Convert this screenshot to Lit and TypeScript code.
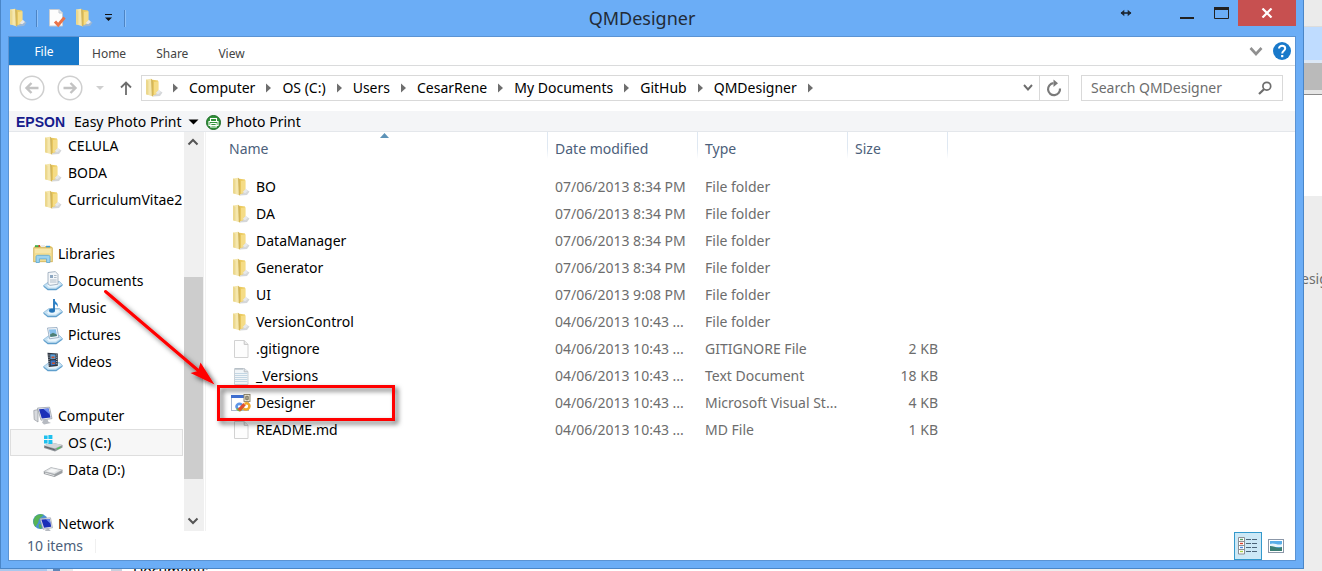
import { LitElement, html, css, svg, nothing } from "lit";
import { customElement, state } from "lit/decorators.js";

type IconName =
  | "folder" | "file" | "text" | "vs" | "libraries" | "documents" | "music"
  | "pictures" | "videos" | "computer" | "osdrive" | "drive" | "network";

const tray = svg`
  <path d="M.5 14.500 6 10.500H16.500L19.500 13.500 13 18H5Z" fill="#c3e0f3" stroke="#86b5d6" stroke-width=".7"/>
  <path d="M4 14.300 7.500 12H15.500l1.500 1.600L12.500 16.500H6Z" fill="#eaf6fd"/>
  <path d="M.5 14.500 5 18H13l6.500-4.500v1.300L13.300 19.200H4.700L.5 15.800Z" fill="#5f9fcd"/>`;

const glyphs: Record<IconName, unknown> = {
  folder: svg`
    <path d="M12 10.500 18.500 14.500 16 18 9 18.500Z" fill="#b9bcc0" opacity=".6"/>
    <path d="M8.500 1.800 14 2.600V15.500L8.500 17.500Z" fill="#eccb5f"/>
    <path d="M10 4 14.600 3.200V13.800L10 17Z" fill="#f5dc86"/>
    <path d="M2 1.500 7 .8 9 2.800V18.600L2 16.200Z" fill="#f5e7ae"/>
    <path d="M2 1.500 4.400 2.800V17L2 16.200Z" fill="#ecd88d"/>
    <path d="M7 .8 9.200 2.500v16L7.800 18Z" fill="#d3b65b"/>
    <path d="M11.500 15.200 14.800 11.800l2.200 2.200-2.800 2.200Z" fill="#e6e8ea"/>`,
  file: svg`
    <path d="M3.500 1.500h9.800l3.700 3.800v13.200H3.500Z" fill="#fdfdfd" stroke="#d2d2d2"/>
    <path d="M13.200 1.600v3.800H17" fill="#eee" stroke="#c6c6c6"/>`,
  text: svg`
    <path d="M3.500 2.500h9.800l3.700 3v13H3.500Z" fill="#f1f5f8" stroke="#c9d0d6"/>
    <path d="M5 2v2M7 2v2M9 2v2M11 2v2" stroke="#a6b0b8"/>
    <path d="M4 7.500h12.500M4 9.500h12.500M4 11.500h12.500M4 13.500h12.500M4 15.500h12.500" stroke="#c3d6e3"/>
    <path d="M13.200 2.400v3.400H17" fill="#e4e7ea" stroke="#b9bfc5"/>`,
  vs: svg`
    <rect x=".5" y="2.500" width="17" height="15" fill="#fff" stroke="#a9b8ce"/>
    <path d="M0 2h13v3H0Z" fill="#3f6fd1"/>
    <rect x="13" y="1.500" width="6" height="7" fill="#f0ead8" stroke="#8a8268" stroke-width=".9"/>
    <path d="M14.800 3.300h2.400v3.400h-2.400zM14.800 5h2.400" fill="none" stroke="#5d573f" stroke-width=".8"/>
    <ellipse cx="8.500" cy="13.500" rx="3" ry="2.600" fill="none" stroke="#5d95e8" stroke-width="2.600"/>
    <path d="M6 15.500C8 18.800 10.500 17 12 14" fill="none" stroke="#7cb342" stroke-width="2.200"/>
    <path d="M8 17.200 13.600 11.200" stroke="#e2502d" stroke-width="3.400"/>
    <path d="M13.500 10.800c3.500-1.400 6 1 4.400 4-1.400 2.200-4 2.200-5.600.6" fill="none" stroke="#f1a828" stroke-width="2.500"/>`,
  libraries: svg`
    <path d="M.5 4 1.800 2H18l1.500 2v14H.5Z" fill="#e8cd72"/>
    <path d="M2 1.200h4v2H2Z" fill="#3fae49"/><path d="M8 1.200h4v2H8Z" fill="#e8e8e8"/><path d="M13 1.800h4v2h-4Z" fill="#3d9bd6"/>
    <path d="M5.500 1h1.600v2H5.500Z" fill="#d9442f"/>
    <rect x=".8" y="3.800" width="18.400" height="14" fill="#f2dd92" stroke="#cdae58" stroke-width=".7"/>
    <path d="M2 6h16M2 8h16" stroke="#faeec0"/>
    <path d="M3 18.500v-5.600c0-1 .6-1.600 1.600-1.600h10.800c1 0 1.600.6 1.600 1.600v5.600h-3.400v-3.600H6.400v3.600Z" fill="#9cd2ef" stroke="#5aa6d0" stroke-width=".8"/>`,
  documents: svg`${tray}
    <path d="M5 1.500 12.400.6 15 3.400v9.800L7 14.400 5 13Z" fill="#f3f6f9" stroke="#94a6b8" stroke-width=".8"/>
    <path d="M7 4h3v3H7Z" fill="#8ca6c0"/><path d="M11 4.500h2.600M11 6.500h2.600M7 9h6.600M7 11h6.600" stroke="#a7b5c2" stroke-width=".9"/>`,
  music: svg`${tray}
    <path d="M11 1v11.400" stroke="#2273b8" stroke-width="1.800"/>
    <path d="M11 1c.4 3 5 3.400 3.600 8.200C14.400 6.800 12.500 6.200 11 6Z" fill="#2b83cb"/>
    <ellipse cx="9" cy="12.600" rx="3" ry="2.200" fill="#2273b8"/>`,
  pictures: svg`${tray}
    <path d="M4.500 3 14 2.500 15.800 12.500 6.600 13.800Z" fill="#f4f7fa" stroke="#8ba3bb" stroke-width=".8"/>
    <path d="M6 4.600 12.800 4.200 14 11 7.400 11.900Z" fill="#86c0ec"/>
    <path d="M7 9.500 10 7.800 13.700 9.600 14 11 7.400 11.900Z" fill="#4d7f74"/>`,
  videos: svg`${tray}
    <path d="M4.500 .8 14.800 1.600V14L5.800 15Z" fill="#2c3440"/>
    <path d="M7.300 2.300 12.500 2.500V7L7.400 7.200Z" fill="#5aa0d8"/><path d="M7.500 8.500 12.500 8.200V12.800L7.800 13.400Z" fill="#3b74c2"/>
    <path d="M8.500 4.500h3v1.800h-3zM9 10.500h3v1.600H9z" fill="#c9512e"/>
    <path d="M6 2.500V14M13.700 2.500v11" stroke="#d8dee5" stroke-dasharray="1 1.200" stroke-width=".9"/>`,
  computer: svg`
    <path d="M.8 4.500 5 3.500V16L1.200 13.500Z" fill="#d8dade" stroke="#94989f" stroke-width=".7"/>
    <path d="M4.500 2 16.500 1.200 19 12.600 8 14.200Z" fill="#e4e7ec" stroke="#8f96a1" stroke-width=".7"/>
    <path d="M6 3.200 15.600 2.500 17.400 11.400 8.800 12.500Z" fill="#1b2fb8"/>
    <path d="M10.500 3 15.600 2.500 16.800 8.500Z" fill="#6d8df0"/>
    <path d="M10.500 14 14.500 13.400 15.400 15.800 18 17 11 18.500 9 16.600Z" fill="#b6bac1"/>`,
  osdrive: svg`
    <path d="M1 12.500 8 9.500 19.500 12V14.500L12 18.500 1 15Z" fill="#8f9499"/>
    <path d="M1 12.500 8 9.500 19.500 12 12 15.600Z" fill="#d3d6d9"/>
    <path d="M2 13.800 11.800 16.800" stroke="#5d6267"/><path d="M14 16 17.500 14.200" stroke="#47d04f" stroke-width="1.200"/>
    <path d="M1 2.500h3.600v3.600H1zM5.400 2.100h4v4h-4zM1 6.900h3.600v3.600H1zM5.400 6.900h4v4h-4z" fill="#1ec0ee"/>`,
  drive: svg`
    <path d="M.8 11.500 8 7.500 19.500 10V13L11.500 17 .8 14Z" fill="#9a9ea2"/>
    <path d="M.8 11.500 8 7.500 19.500 10 11.500 14.200Z" fill="#e3e5e7" stroke="#a4a8ac" stroke-width=".5"/>
    <path d="M4 11.400 8.800 8.800 15 10 11 12.400Z" fill="#f7f8f8"/>
    <path d="M2 13 11.400 15.600" stroke="#e6e7e8"/>`,
  network: svg`
    <circle cx="7.500" cy="7.500" r="7.500" fill="#4b8fd6"/>
    <path d="M2 3C4 0 8-.2 10.500.8 9 3.500 6 3.500 5.600 7 5 10 3 11 2.600 13 .2 10.500-.6 6.500 2 3Z" fill="#57b356"/>
    <path d="M6 10c2-.4 3 1.500 2.500 4.800C6 15 5 13 6 10Z" fill="#57b356"/>
    <path d="M7 4.500 17.500 3.800 19.500 13.800 10 15.200Z" fill="#e4e7ec" stroke="#8f96a1" stroke-width=".6"/>
    <path d="M8.300 5.600 16.700 5 18.200 12.700 11 13.700Z" fill="#1b2fb8"/><path d="M12.800 5.300 16.700 5 17.600 9.800Z" fill="#6d8df0"/>
    <path d="M12.500 15.400 15.800 14.800 18 17.200 12 18.200Z" fill="#b6bac1"/>`,
};

const icon = (name: IconName) =>
  html`<svg class="icon" viewBox="0 0 20 20" aria-hidden="true">${glyphs[name]}</svg>`;

interface NavItem { label: string; icon: IconName; child?: boolean; }

const NAV: NavItem[][] = [
  [
    { label: "CELULA", icon: "folder", child: true },
    { label: "BODA", icon: "folder", child: true },
    { label: "CurriculumVitae2013", icon: "folder", child: true },
  ],
  [
    { label: "Libraries", icon: "libraries" },
    { label: "Documents", icon: "documents", child: true },
    { label: "Music", icon: "music", child: true },
    { label: "Pictures", icon: "pictures", child: true },
    { label: "Videos", icon: "videos", child: true },
  ],
  [
    { label: "Computer", icon: "computer" },
    { label: "OS (C:)", icon: "osdrive", child: true },
    { label: "Data (D:)", icon: "drive", child: true },
  ],
  [{ label: "Network", icon: "network" }],
];

const CRUMBS = ["Computer", "OS (C:)", "Users", "CesarRene", "My Documents", "GitHub", "QMDesigner"];

interface Entry { name: string; date: string; type: string; size: string; icon: IconName; }

const folder = (name: string, date: string): Entry => ({ name, date, type: "File folder", size: "", icon: "folder" });

const FILES: Entry[] = [
  folder("BO", "07/06/2013 8:34 PM"),
  folder("DA", "07/06/2013 8:34 PM"),
  folder("DataManager", "07/06/2013 8:34 PM"),
  folder("Generator", "07/06/2013 8:34 PM"),
  folder("UI", "07/06/2013 9:08 PM"),
  folder("VersionControl", "04/06/2013 10:43 ..."),
  { name: ".gitignore", date: "04/06/2013 10:43 ...", type: "GITIGNORE File", size: "2 KB", icon: "file" },
  { name: "_Versions", date: "04/06/2013 10:43 ...", type: "Text Document", size: "18 KB", icon: "text" },
  { name: "Designer", date: "04/06/2013 10:43 ...", type: "Microsoft Visual St...", size: "4 KB", icon: "vs" },
  { name: "README.md", date: "04/06/2013 10:43 ...", type: "MD File", size: "1 KB", icon: "file" },
];

@customElement("app-root")
export class AppRoot extends LitElement {
  @state() private selected = "OS (C:)";

  static styles = css`
    :host {
      display: grid;
      grid-template-columns: minmax(0, 1fr) 18px;
      grid-template-rows: minmax(0, 1fr) 2px;
      height: 100vh;
      overflow: hidden;
      background: #ededed;
      font: 14px/20px "Noto Sans", "Open Sans", sans-serif;
      color: #000;
    }
    * { box-sizing: border-box; }
    button {
      font: inherit;
      color: inherit;
      background: none;
      border: 0;
      padding: 0;
      margin: 0;
      display: flex;
      align-items: center;
      justify-content: center;
      white-space: nowrap;
    }
    svg { display: block; flex: none; }
    .icon { width: 20px; height: 20px; }

    .window {
      position: relative;
      display: flex;
      flex-direction: column;
      background: #6badf6;
      border: solid #4a86c8;
      border-width: 0 1px 1px;
      padding: 0 7px 7px;
    }
    .titlebar {
      display: grid;
      grid-template-columns: 1fr auto 1fr;
      height: 36px;
      flex: none;
    }
    .quick { display: flex; align-items: center; gap: 8px; }
    .quick .bar { width: 2px; height: 17px; background: #4d84c4; border-right: 1px solid #8fc2fa; }
    .quick .bar:last-child { margin-left: 3px; }
    .quick .customize { margin-left: 2px; }
    .quick .properties { margin-left: 2px; }
    h1 { margin: 0 20px 0 0; font-size: 18px; line-height: 36px; font-weight: 400; color: #222b36; }
    .controls { display: flex; justify-content: flex-end; align-items: flex-start; }
    .controls button { width: 34px; height: 26px; }
    .controls .resize { width: 28px; margin-right: 30px; }
    .controls .close { width: 58px; background: #c75050; }

    .client {
      flex: 1;
      min-height: 0;
      display: flex;
      flex-direction: column;
      background: #fff;
      border: 1px solid #5b93d3;
    }
    .ribbon {
      display: flex;
      align-items: center;
      height: 29px;
      flex: none;
      border-bottom: 1px solid #dadbdc;
      font-size: 12px;
      color: #444;
      padding-right: 4px;
    }
    .ribbon .file { width: 70px; height: 28px; padding-top: 1px; background: #1979ca; color: #fff; align-self: flex-start; }
    .tabs { display: flex; gap: 30px; padding: 5px 13px 0; flex: 1; }
    .ribbon .help { margin-left: 10px; }

    .address { display: flex; align-items: center; height: 45px; padding: 0 12px 2px 10px; flex: none; }
    .address .fwd { margin-left: 12px; }
    .address .recent { width: 8px; margin-left: 13px; }
    .address .up { width: 14px; margin: 0 8px 0 15px; }
    .path {
      flex: 1;
      display: flex;
      height: 26px;
      border: 1px solid #d9d9d9;
      align-items: center;
      padding-left: 2px;
    }
    .crumbs { flex: 1; display: flex; align-items: center; gap: 10px; padding-left: 8px; }
    .path .down { width: 22px; height: 24px; }
    .path .refresh { width: 29px; height: 24px; border-left: 1px solid #d9d9d9; }
    .search {
      display: flex;
      align-items: center;
      width: 202px;
      height: 26px;
      margin-left: 12px;
      border: 1px solid #d9d9d9;
      padding: 0 10px 0 9px;
    }
    .search input {
      flex: 1;
      min-width: 0;
      border: 0;
      outline: 0;
      padding: 0;
      font: inherit;
      background: none;
    }
    .search input::placeholder { color: #6d6d6d; opacity: 1; }

    .toolbar {
      display: flex;
      align-items: center;
      height: 21px;
      flex: none;
      padding: 2px 7px 0;
      background: #f4f5f7;
      border-bottom: 1px solid #e4e7eb;
    }
    .toolbar b { font: bold 14px/20px "Liberation Sans", Arial, sans-serif; color: #161c8c; margin-right: 9px; }
    .toolbar .caret { margin: 0 7px; }
    .toolbar .photo { gap: 5px; }

    .main { flex: 1; min-height: 0; display: flex; }
    .nav { width: 175px; flex: none; overflow: hidden; padding-right: 1px; }
    .nav ul { list-style: none; margin: 0 0 27px; padding: 0; }
    .nav li { padding-left: 1px; }
    .nav button {
      width: 100%;
      height: 27px;
      justify-content: flex-start;
      gap: 5px;
      padding-left: 22px;
      border: 1px solid transparent;
      overflow: hidden;
    }
    .nav button.child { padding-left: 32px; }
    .nav button.selected { background: #f7f7f7; border-color: #dedede; }

    .scroll {
      width: 20px;
      flex: none;
      display: grid;
      grid-template-rows: 20px 125px 202px 1fr 20px;
      background: #f0f0f0;
      justify-items: start;
      align-items: center;
    }
    .scroll svg { margin-left: 3px; }
    .thumb { grid-row: 3; width: 19px; height: 100%; background: #cdcdcd; }
    .scroll .end { grid-row: 5; }

    .list { flex: 1; min-width: 0; border-left: 1px solid #f2f2f2; margin-left: 1px; overflow: hidden; }
    table { width: 100%; table-layout: fixed; border-collapse: collapse; }
    .c-name { width: 342px; }
    .c-mid { width: 150px; }
    .c-size { width: 100px; }
    th {
      height: 41px;
      padding: 0 7px 8px;
      text-align: left;
      font-weight: 400;
      color: #4c607a;
      background: linear-gradient(#dfe8f2, #dfe8f2 60%, #fff) right top / 1px 27px no-repeat;
    }
    th:last-child { background: none; }
    th.first { padding-left: 23px; }
    .sort { float: right; margin: -6px 152px 0 0; }
    td { height: 27px; padding: 0 7px; color: #6d6d6d; white-space: nowrap; }
    td.name { color: #000; padding-left: 25px; }
    td.num { text-align: right; padding-right: 10px; }
    .cell { display: flex; align-items: center; gap: 5px; }

    .status { display: flex; align-items: center; height: 29px; flex: none; padding: 0 6px 0 18px; color: #4c607a; }
    .status .count { padding-right: 12px; border-right: 1px solid #f0f0f0; line-height: 14px; margin-right: auto; }
    .status .view { width: 28px; height: 28px; }
    .status .on { background: #cce8f6; border: 1px solid #3399cc; }
    .status .view:last-child { width: 27px; }

    .marks { position: absolute; left: -1px; top: 0; pointer-events: none; }

    .behind { display: flex; flex-direction: column; overflow: hidden; color: #6d6d6d; }
    .strip-a { height: 27px; background: #ebebeb; border-bottom: 1px solid #dcdcdc; }
    .strip-b { height: 33px; background: #bfdcff; }
    .strip-c { height: 30px; background: #bababa; border-top: 3px solid #dbe7f5; }
    .strip-d { height: 5px; background: #e5e5e5; border-bottom: 1px solid #8a8a8a; }
    .strip-e { height: 101px; background: #fff; }
    .peek { display: flex; width: 24px; margin: 73px 0 0 -3px; }
    .below {
      grid-column: 1 / -1;
      display: flex;
      overflow: hidden;
      background: linear-gradient(90deg, #a9c8ee 47px, #d5e4f6 47px, #d5e4f6 53px, #5f86b8 53px, #5f86b8 60px, #e8e8e8 60px, #e8e8e8 73px, #fff 73px, #fff 111px, #c9cfdc 111px, #c9cfdc 122px, #fff 122px, #fff 1010px, #ededed 1010px);
    }
    .below span { margin: -6px 0 0 133px; line-height: 16px; }
  `;

  private separator() {
    return html`<svg width="7" height="10" viewBox="0 0 7 10" aria-hidden="true"><path d="M1 .5 6 5 1 9.500Z" fill="#6e6e6e"/></svg>`;
  }

  private titlebar() {
    return html`
      <header class="titlebar">
        <div class="quick">
          ${icon("folder")}
          <span class="bar"></span>
          <button class="properties" aria-label="Properties">
            <svg width="18" height="20" viewBox="0 0 18 20"><path d="M1.500 1.500h9.500l3.500 3.500v13h-13Z" fill="#fdfdfd" stroke="#c5cbd2"/><path d="M11 1.500V5h3.500" fill="#e5e8ec" stroke="#c5cbd2"/><path d="M7 13.500 10.200 17 16.500 9.500" fill="none" stroke="#ea7348" stroke-width="3"/></svg>
          </button>
          <button aria-label="New folder">${icon("folder")}</button>
          <button class="customize" aria-label="Customize">
            <svg width="9" height="8" viewBox="0 0 9 8"><path d="M1 .5h7" stroke="#111"/><path d="M1 3.500h7L4.500 7Z" fill="#111"/></svg>
          </button>
          <span class="bar"></span>
        </div>
        <h1>QMDesigner</h1>
        <div class="controls">
          <button class="resize" aria-label="Resize">
            <svg width="12" height="8" viewBox="0 0 12 8"><path d="M1 4h10" stroke="#1d2733" stroke-width="1.600"/><path d="M4.300.8V7.200L.6 4ZM7.700.8V7.200L11.400 4Z" fill="#1d2733"/></svg>
          </button>
          <button aria-label="Minimize"><svg width="14" height="14"><path d="M0 12h14" stroke="#222" stroke-width="2"/></svg></button>
          <button aria-label="Maximize"><svg width="15" height="12"><path d="M.5 1.500h14v10H.5Z" fill="none" stroke="#222"/><path d="M0 1.500h15" stroke="#222" stroke-width="3"/></svg></button>
          <button class="close" aria-label="Close"><svg width="12" height="10"><path d="M1.500.5 10.500 9.500M10.500.5 1.500 9.500" stroke="#fff" stroke-width="2.200"/></svg></button>
        </div>
      </header>`;
  }

  private ribbon() {
    return html`
      <div class="ribbon">
        <button class="file">File</button>
        <nav class="tabs"><button>Home</button><button>Share</button><button>View</button></nav>
        <button aria-label="Expand ribbon"><svg width="14" height="10"><path d="M1.500 2 7 8 12.500 2" fill="none" stroke="#909090" stroke-width="2.600"/></svg></button>
        <button class="help" aria-label="Help">
          <svg width="18" height="18" viewBox="0 0 18 18"><circle cx="9" cy="9" r="9" fill="#1979ca"/><path d="M6 6.600C6 2.800 12.200 3 12.200 6.400 12.200 8.800 9.200 8.600 9.200 11.500" fill="none" stroke="#fff" stroke-width="2"/><path d="M8.100 13h2.200v2.200H8.100Z" fill="#fff"/></svg>
        </button>
      </div>`;
  }

  private address() {
    return html`
      <div class="address">
        <button aria-label="Back"><svg width="26" height="26"><circle cx="13" cy="13" r="11.800" fill="none" stroke="#cfcfcf" stroke-width="1.500"/><path d="M19.500 13H8M12.500 8 7.500 13l5 5" fill="none" stroke="#c3c3c3" stroke-width="2.400"/></svg></button>
        <button class="fwd" aria-label="Forward"><svg width="26" height="26"><circle cx="13" cy="13" r="11.800" fill="none" stroke="#cfcfcf" stroke-width="1.500"/><path d="M6.500 13H18M13.500 8 18.500 13l-5 5" fill="none" stroke="#c3c3c3" stroke-width="2.400"/></svg></button>
        <button class="recent" aria-label="Recent locations"><svg width="8" height="4"><path d="M0 0h8L4 4Z" fill="#cfcfcf"/></svg></button>
        <button class="up" aria-label="Up"><svg width="12" height="14"><path d="M6 14V1.500M1 6.500 6 1.500l5 5" fill="none" stroke="#6d6d6d" stroke-width="1.800"/></svg></button>
        <div class="path">
          ${icon("folder")}
          <div class="crumbs">
            ${this.separator()}
            ${CRUMBS.map((c) => html`<button>${c}</button>${this.separator()}`)}
          </div>
          <button class="down" aria-label="Previous locations"><svg width="10" height="7"><path d="M1 1 5 5.500 9 1" fill="none" stroke="#6d6d6d" stroke-width="1.900"/></svg></button>
          <button class="refresh" aria-label="Refresh"><svg width="16" height="18" viewBox="0 0 16 18"><path d="M7.500 4.200A6 6 0 1 0 14 9.500" fill="none" stroke="#7a7a7a" stroke-width="2.200"/><path d="M7.500.5V8L12 4.200Z" fill="#7a7a7a"/></svg></button>
        </div>
        <label class="search">
          <input type="text" placeholder="Search QMDesigner" aria-label="Search QMDesigner" />
          <svg width="14" height="14"><circle cx="8.800" cy="5.200" r="3.900" fill="none" stroke="#6d6d6d" stroke-width="1.700"/><path d="M6 8.200 1 13" stroke="#6d6d6d" stroke-width="2.200"/></svg>
        </label>
      </div>`;
  }

  private toolbar() {
    return html`
      <div class="toolbar">
        <b>EPSON</b>
        <button>Easy Photo Print</button>
        <button class="caret" aria-label="More"><svg width="11" height="6"><path d="M.5 .5h10L5.500 5.500Z" fill="#000"/></svg></button>
        <button class="photo">
          <svg width="15" height="15" viewBox="0 0 15 15"><circle cx="7.500" cy="7.500" r="7" fill="#2f9138" stroke="#1f6b28"/><path d="M4.500 6V3.500h6V6M3 6.500h9v4H3ZM4.800 8.500h5.400V12H4.800Z" fill="none" stroke="#fff" stroke-width="1.100"/></svg>
          Photo Print
        </button>
      </div>`;
  }

  private navPane() {
    return html`
      <nav class="nav">
        ${NAV.map((group) => html`<ul>${group.map((item) => html`
          <li><button
            class="${item.child ? "child" : ""} ${this.selected === item.label ? "selected" : ""}"
            @click=${() => (this.selected = item.label)}
          >${icon(item.icon)}${item.label}</button></li>`)}</ul>`)}
      </nav>
      <div class="scroll" aria-hidden="true">
        <svg width="12" height="8"><path d="M1.500 6.500 6 2l4.500 4.500" fill="none" stroke="#555" stroke-width="2"/></svg>
        <span class="thumb"></span>
        <svg class="end" width="12" height="8"><path d="M1.500 1.500 6 6l4.500-4.500" fill="none" stroke="#555" stroke-width="2"/></svg>
      </div>`;
  }

  private fileList() {
    return html`
      <div class="list">
        <table>
          <colgroup><col class="c-name" /><col class="c-mid" /><col class="c-mid" /><col class="c-size" /><col /></colgroup>
          <thead>
            <tr>
              <th class="first" scope="col">Name<svg class="sort" width="9" height="5"><path d="M0 5 4.500 0 9 5Z" fill="#5d93b8"/></svg></th>
              <th scope="col">Date modified</th>
              <th scope="col">Type</th>
              <th scope="col">Size</th>
              <th></th>
            </tr>
          </thead>
          <tbody>
            ${FILES.map((f) => html`
              <tr>
                <td class="name"><div class="cell">${icon(f.icon)}<span>${f.name}</span></div></td>
                <td>${f.date}</td>
                <td>${f.type}</td>
                <td class="num">${f.size || nothing}</td>
                <td></td>
              </tr>`)}
          </tbody>
        </table>
      </div>`;
  }

  private status() {
    return html`
      <footer class="status">
        <span class="count">10 items</span>
        <button class="view on" aria-label="Details view">
          <svg width="20" height="18" viewBox="0 0 20 18"><path d="M.5.500h6v16.500h-6ZM.5 4.500h6M.5 8.500h6M.5 12.500h6" fill="#fff" stroke="#8b8f94"/><path d="M2 2.500h3" stroke="#5c9e67" stroke-width="1.400"/><path d="M2 6.500h3" stroke="#d9442f" stroke-width="1.400"/><path d="M2 10.500h3" stroke="#4a87e0" stroke-width="1.400"/><path d="M2 14.500h3" stroke="#a7cf4b" stroke-width="1.400"/><path d="M8 2.500h5M14 2.500h5M8 6.500h5M14 6.500h5M8 10.500h5M14 10.500h5M8 14.500h5M14 14.500h5" stroke="#4b6478"/></svg>
        </button>
        <button class="view" aria-label="Thumbnail view">
          <svg width="16" height="14" viewBox="0 0 16 14"><rect x=".5" y=".5" width="15" height="13" fill="#fff" stroke="#8b97a8"/><path d="M2 2h12v10H2Z" fill="#5aaee8"/><path d="M2 5c4-2 8 2 12 0v3H2Z" fill="#e6f4fc"/><path d="M2 7c4 0 8 3 12 1v4H2Z" fill="#3c7f74"/></svg>
        </button>
      </footer>`;
  }

  private marks() {
    return html`
      <svg class="marks" width="420" height="440" aria-hidden="true">
        <defs>
          <filter id="shade" x="-20%" y="-20%" width="140%" height="150%">
            <feDropShadow dx="3" dy="3" stdDeviation="2.500" flood-color="#000" flood-opacity=".6" />
          </filter>
        </defs>
        <g filter="url(#shade)">
          <path d="M105.500 291.500 200 372" stroke="#f00" stroke-width="3" stroke-linecap="round"/>
          <path d="M214.500 384.500 190.500 373 198 371 200.500 362.500Z" fill="#f00"/>
          <rect x="218.500" y="386.500" width="175" height="33" fill="none" stroke="#f00" stroke-width="3"/>
        </g>
      </svg>`;
  }

  render() {
    return html`
      <section class="window">
        ${this.titlebar()}
        <div class="client">
          ${this.ribbon()} ${this.address()} ${this.toolbar()}
          <div class="main">${this.navPane()} ${this.fileList()}</div>
          ${this.status()}
        </div>
        ${this.marks()}
      </section>
      <aside class="behind">
        <div class="strip-a"></div><div class="strip-b"></div><div class="strip-c"></div>
        <div class="strip-d"></div><div class="strip-e"></div>
        <div class="peek">esign</div>
      </aside>
      <div class="below"><span>Documents</span></div>`;
  }
}
